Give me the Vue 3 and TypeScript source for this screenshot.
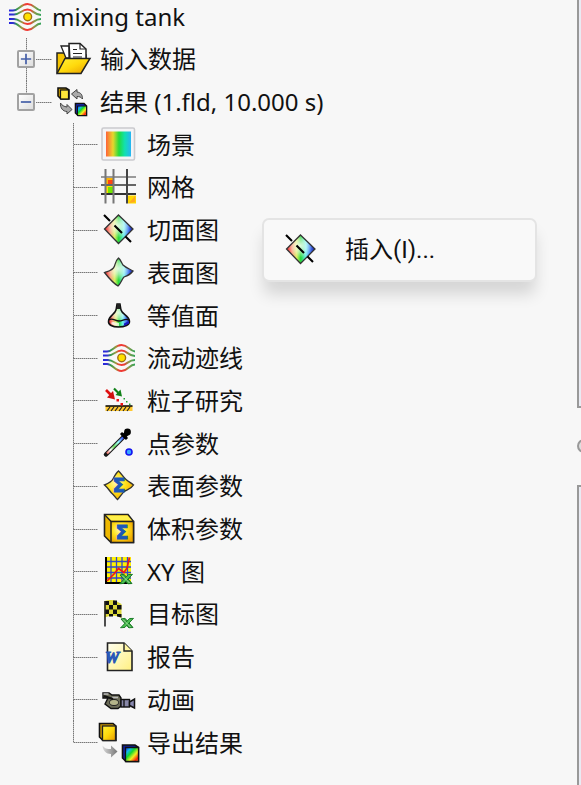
<script setup lang="ts">
import { computed, ref } from 'vue'

interface Glyph {
  text: string
  kind: 'sigma' | 'word'
  x: number
  y: number
}

interface TreeNode {
  icon: string
  label: string
  glyph?: Glyph
}

const resultsOpen = ref(true)
const inputsOpen = ref(false)

const results: TreeNode[] = [
  { icon: 'scene', label: '场景' },
  { icon: 'mesh', label: '网格' },
  { icon: 'cut', label: '切面图' },
  { icon: 'surface', label: '表面图' },
  { icon: 'iso', label: '等值面' },
  { icon: 'flow', label: '流动迹线' },
  { icon: 'particle', label: '粒子研究' },
  { icon: 'point', label: '点参数' },
  { icon: 'surface-param', label: '表面参数', glyph: { text: 'Σ', kind: 'sigma', x: 19, y: 24 } },
  { icon: 'volume-param', label: '体积参数', glyph: { text: 'Σ', kind: 'sigma', x: 22, y: 28 } },
  { icon: 'xy', label: 'XY 图' },
  { icon: 'goal', label: '目标图' },
  { icon: 'report', label: '报告', glyph: { text: 'W', kind: 'word', x: 12, y: 24 } },
  { icon: 'animation', label: '动画' },
  { icon: 'export', label: '导出结果' },
]

const visibleResults = computed(() => (resultsOpen.value ? results : []))
</script>

<template>
  <div class="page">
    <svg class="sprite" aria-hidden="true">
      <defs>
        <linearGradient id="g-flow" gradientUnits="userSpaceOnUse" x1="3" y1="0" x2="35" y2="0">
          <stop offset="0" stop-color="#2222e0" />
          <stop offset=".14" stop-color="#3333cc" />
          <stop offset=".24" stop-color="#2f9a50" />
          <stop offset=".4" stop-color="#9a9a40" />
          <stop offset=".5" stop-color="#f03a34" />
          <stop offset=".66" stop-color="#f03a34" />
          <stop offset=".8" stop-color="#8a9a48" />
          <stop offset="1" stop-color="#2fa45a" />
        </linearGradient>
        <linearGradient id="g-scene">
          <stop offset="0" stop-color="#ff6238" />
          <stop offset=".28" stop-color="#e8d62c" />
          <stop offset=".52" stop-color="#22dc3c" />
          <stop offset=".75" stop-color="#12e0b0" />
          <stop offset="1" stop-color="#28b4f4" />
        </linearGradient>
        <linearGradient id="g-rain">
          <stop offset="0" stop-color="#f02030" />
          <stop offset=".2" stop-color="#f8a080" />
          <stop offset=".36" stop-color="#d8f060" />
          <stop offset=".5" stop-color="#20d838" />
          <stop offset=".68" stop-color="#70f0f0" />
          <stop offset=".84" stop-color="#4878f0" />
          <stop offset="1" stop-color="#1010a0" />
        </linearGradient>
        <radialGradient id="g-white" cx=".48" cy=".38" r=".42">
          <stop offset="0" stop-color="#fff" stop-opacity=".85" />
          <stop offset=".5" stop-color="#fff" stop-opacity=".5" />
          <stop offset="1" stop-color="#fff" stop-opacity="0" />
        </radialGradient>
        <linearGradient id="g-gold" x1="0" y1="0" x2="1" y2="1">
          <stop offset="0" stop-color="#fff23a" />
          <stop offset=".5" stop-color="#ffd90c" />
          <stop offset="1" stop-color="#e89a00" />
        </linearGradient>
        <radialGradient id="g-gold-r" cx=".4" cy=".4" r=".65">
          <stop offset="0" stop-color="#fffbb0" />
          <stop offset=".5" stop-color="#ffe21c" />
          <stop offset="1" stop-color="#f0a800" />
        </radialGradient>
        <linearGradient id="g-cube" x1="0" y1="0" x2="1" y2="1">
          <stop offset="0" stop-color="#1020e0" />
          <stop offset=".22" stop-color="#10b8f0" />
          <stop offset=".4" stop-color="#10d830" />
          <stop offset=".62" stop-color="#f0f020" />
          <stop offset=".85" stop-color="#ff2010" />
          <stop offset="1" stop-color="#f8a020" />
        </linearGradient>
        <linearGradient id="g-page" x1="0" y1="0" x2="1" y2="1">
          <stop offset="0" stop-color="#fffff0" />
          <stop offset="1" stop-color="#fff080" />
        </linearGradient>
        <linearGradient id="g-arrow">
          <stop offset="0" stop-color="#d8d8d8" />
          <stop offset="1" stop-color="#777" />
        </linearGradient>
        <linearGradient id="g-drop" gradientUnits="userSpaceOnUse" x1="6" y1="28" x2="26" y2="9">
          <stop offset="0" stop-color="#f05040" />
          <stop offset=".22" stop-color="#fff" />
          <stop offset=".4" stop-color="#70e060" />
          <stop offset=".62" stop-color="#a0ffff" />
          <stop offset=".82" stop-color="#4060ff" />
          <stop offset="1" stop-color="#102080" />
        </linearGradient>
      </defs>

      <symbol id="excel" viewBox="0 0 14 11">
        <path d="M1 1.500 5 .800 13 10 9 10.500Z" fill="#38a53c" stroke="#187a26" stroke-width="1" />
        <path d="M9.500 1 13.500 .800 5 9.800 .500 10.500Z" fill="#4cc050" stroke="#187a26" stroke-width="1" />
        <path d="m3 2 7.500 7.500" stroke="#c8efc4" stroke-width=".8" />
      </symbol>

      <symbol id="flow" viewBox="0 0 36 36">
        <g fill="none" stroke="url(#g-flow)" stroke-width="2">
          <path d="M3 11.500H7C13 11.500 14.500 5 21.500 5S29 11 35 11.500" />
          <path d="M3 15.500H8C14 15.500 15.500 10.500 21.500 10.500S28 16 35 16" />
          <path d="M3 20H8C14 20 15.500 25 21.500 25S28 20 35 20" />
          <path d="M3 24H7C13 24 14.500 31 21.500 31S29 24.500 35 24.500" />
        </g>
        <circle cx="21.700" cy="17.800" r="3.900" fill="#ffe000" stroke="#a07010" stroke-width="1.400" />
      </symbol>

      <symbol id="folder" viewBox="0 0 36 36">
        <path d="M1 32V12H10L12 14H30V20" fill="#f6c400" stroke="#222" stroke-width="1.500" />
        <path d="M5 5H13V17H10Z" fill="#fff" stroke="#222" stroke-width="1.300" />
        <path d="M13 2.500H24L30 8V20H14Z" fill="#fff" stroke="#222" stroke-width="1.500" />
        <path d="M24 2.500V8H30M17 8.500H21M17 12.500H26M17 16H26" fill="none" stroke="#222" stroke-width="1.200" />
        <path d="M1 32.500 9 17.500H34L25 32.500Z" fill="url(#g-gold)" stroke="#222" stroke-width="1.500" />
      </symbol>

      <symbol id="results" viewBox="0 0 36 36">
        <path d="M2 4H10L13 6V15H5L2 12Z" fill="#c79a00" stroke="#111" stroke-width="1.600" />
        <rect x="4.500" y="6" width="8" height="9" fill="#ffe73a" stroke="#111" stroke-width="1.200" />
        <path d="M15.500 10 21 5.500V8C25 8.500 26.500 11 26.500 15 25 13 23.500 12.500 21 12.500V15Z" fill="#aaa" stroke="#444" stroke-width="1" />
        <path d="M16 25.500 11 20.500V23C8 22.500 6 21.500 4.500 19 4 24 7 27.500 11 27.500V30Z" fill="#aaa" stroke="#444" stroke-width="1" />
        <path d="M19.500 19.500H28L30.500 22V31.500H22L19.500 29Z" fill="#1428c8" stroke="#111" stroke-width="1.600" />
        <rect x="21.500" y="22" width="9" height="9.500" fill="url(#g-cube)" stroke="#111" />
      </symbol>

      <symbol id="scene" viewBox="0 0 36 36">
        <rect x="2" y="1" width="32.500" height="32" rx="1.500" fill="#f4f4f6" stroke="#cacace" stroke-width="1.600" />
        <rect x="6" y="4.500" width="25" height="25" fill="url(#g-scene)" />
      </symbol>

      <symbol id="mesh" viewBox="0 0 36 36">
        <rect x="6" y="8" width="8" height="8" fill="#ffb400" />
        <path d="M8 11h6v5H8Z" fill="#ff4410" />
        <rect x="6" y="16" width="8" height="9" fill="#ffe000" />
        <path d="M8 18h6v6H8Z" fill="#70e800" />
        <rect x="28" y="26.500" width="8" height="8" fill="#ffd800" />
        <path d="m29 34 6-7v6Z" fill="#ffa820" />
        <g fill="none" stroke-width="2">
          <path d="M1 8H36" stroke="#9a9a9a" />
          <path d="M1 16H36" stroke="#666" />
          <path d="M1 25H36" stroke="#333" />
          <path d="M5.500 0V34.500M13.500 0V34.500" stroke="#777" />
          <path d="M27 0V34.500" stroke="#444" />
        </g>
      </symbol>

      <symbol id="cut" viewBox="0 0 36 36">
        <path d="M18.500 3 33 17 18.500 31.500 4.500 17Z" fill="url(#g-rain)" />
        <path d="M18.500 3 33 17 18.500 31.500 4.500 17Z" fill="url(#g-white)" stroke="#333" stroke-width="1.300" />
        <path d="m4 3 6 6M14.500 13.500l7.500 7.500M25.500 24.500l5.500 5.500" stroke="#000" stroke-width="2.100" />
      </symbol>

      <symbol id="surface" viewBox="0 0 36 36">
        <path d="M18.500 3C21 5 21.500 8 23 10 26 13 30 14 33 16 30 20 27 21 24 22 22 24 20.500 29 18 31 13 28 8 22 4.500 17.500 9 16 13 15.500 14.500 11 15.500 8 16 5 18.500 3Z" fill="url(#g-rain)" />
        <path d="M18.500 3C21 5 21.500 8 23 10 26 13 30 14 33 16 30 20 27 21 24 22 22 24 20.500 29 18 31 13 28 8 22 4.500 17.500 9 16 13 15.500 14.500 11 15.500 8 16 5 18.500 3Z" fill="url(#g-white)" stroke="#333" stroke-width="1.300" />
      </symbol>

      <symbol id="iso" viewBox="0 0 36 36">
        <path d="M17 6h3l1 6c1 4 8 6 8.500 11 .500 4-5 6-11 6S8 27 8.500 23C9 18 15 16 16 12Z" fill="url(#g-rain)" />
        <path d="M17 6h3l1 6c1 4 8 6 8.500 11 .500 4-5 6-11 6S8 27 8.500 23C9 18 15 16 16 12Z" fill="url(#g-white)" stroke="#111" stroke-width="1.500" />
        <path d="M9 22c3-3 6 1 10 1s6-3 10-1" fill="none" stroke="#111" stroke-width="1.300" />
        <path d="M11 25c2-2 5 0 8 0v3c-4 0-7-1-8-3Z" fill="#fff" opacity=".75" />
        <path d="M17 6h3v5h-3Z" fill="#222" />
        <path d="M24 25.500 29 23v2.500L24 28Z" fill="#1818c0" />
      </symbol>

      <symbol id="particle" viewBox="0 0 36 36">
        <rect x="5.500" y="23" width="27" height="5" fill="#ffc830" />
        <path d="M5.500 23H32.500" stroke="#000" stroke-width="1.500" />
        <path d="m7 28 3-4m1 4 3-4m1 4 3-4m1 4 3-4m1 4 3-4m1 4 3-4" stroke="#222" stroke-width="1.200" />
        <path d="m6 7 6 6" stroke="#e01010" stroke-width="2.600" />
        <path d="M15 16.500 7 14.500 13 8Z" fill="#d01010" />
        <path d="m14 5.500 5 5" stroke="#108018" stroke-width="2.200" />
        <path d="M22 13.500 15.500 12 20.500 6.500Z" fill="#108018" />
        <path d="M16.500 16h2.500v2.500h-2.500ZM20.500 20h2.500v2.500h-2.500Z" fill="#f01010" />
        <path d="M23.500 15h1.500v1.500h-1.500ZM26 18h1.500v1.500H26ZM29 20.500h1.500V22H29Z" fill="#20a030" />
      </symbol>

      <symbol id="point" viewBox="0 0 36 36">
        <path d="m6 28.500 18-18" stroke="#181818" stroke-width="4.500" stroke-linecap="round" />
        <path d="M7 27.500 23.500 11" stroke="url(#g-drop)" stroke-width="2.300" />
        <path d="m21 7 6 6" stroke="#000" stroke-width="3" />
        <path d="m23 11 4-4" stroke="#000" stroke-width="5" />
        <circle cx="27.500" cy="6" r="3.400" fill="#000" />
        <circle cx="29" cy="26" r="3" fill="#38a8ff" stroke="#1414f0" stroke-width="1.600" />
      </symbol>

      <symbol id="surface-param" viewBox="0 0 36 36">
        <path d="M18.500 3C21 5 23 9 26 11.500 29 14 31 15 33.500 17 31 21 28 21.500 25 23 22 25 20 29 17.500 31.500 15 29 14 27 11.500 25 9 22 7 19 4.500 17 8 15.500 11.500 14 13 11 14.500 8 16 5 18.500 3Z" fill="url(#g-gold-r)" stroke="#333" stroke-width="1.400" />
      </symbol>

      <symbol id="volume-param" viewBox="0 0 36 36">
        <path d="M4.500 3.500H28L33.500 10.500V31.500H11L4.500 25Z" fill="#eeb800" stroke="#222" stroke-width="1.600" />
        <path d="M5.500 4.500H27.500L32 9.500H11Z" fill="#fff04a" />
        <rect x="11" y="10.500" width="22.500" height="21" fill="url(#g-gold-r)" stroke="#222" stroke-width="1.500" />
        <path d="m4.500 3.500 6.500 7" stroke="#222" stroke-width="1.300" />
      </symbol>

      <symbol id="xy" viewBox="0 0 36 36">
        <rect x="6" y="3" width="25" height="26" fill="#fff200" />
        <path d="M11 3V29M16.500 3V29M22 3V29M27.500 3V29M6 7.500H31M6 13H31M6 18.500H31M6 24H31" stroke="#3448c8" stroke-width="1.300" />
        <path d="M6 3V29H31" fill="none" stroke="#000" stroke-width="2" />
        <path d="m7 27 7-7 4.500-5.500 5.500 4L27 14l2.500-10.500" fill="none" stroke="#f01818" stroke-width="1.700" />
        <use href="#excel" x="19" y="19.500" width="14" height="11" />
      </symbol>

      <symbol id="goal" viewBox="0 0 36 36">
        <path d="M4.500 5Q12 3 17 5.500L21.500 8V22Q14 18 4.500 21.500Z" fill="#dcd838" />
        <path d="M5 5h4v4H5ZM13 4.500h4V9h-4ZM9 9h4v4.500H9ZM17 9h4.500v4.500H17ZM5 13.500h4V18H5ZM13 13.500h4V18h-4ZM9 18h4v2.500H9ZM17 18h4.500v3.500L17 20.500Z" fill="#111" />
        <path d="M5 5V30.500" stroke="#222" stroke-width="1.600" />
        <use href="#excel" x="20" y="21.500" width="14" height="11" />
      </symbol>

      <symbol id="report" viewBox="0 0 36 36">
        <path d="M7.500 4H24L32 12V31.500H7.500Z" fill="url(#g-page)" stroke="#222" stroke-width="1.600" />
        <path d="M24 4V12H32" fill="#fff6a0" stroke="#222" stroke-width="1.400" />
      </symbol>

      <symbol id="animation" viewBox="0 0 36 36">
        <path d="M3 11H9L12 13H19L21 16V24L18 26.500H11L5 22 8 16H3Z" fill="#6c6c58" stroke="#111" stroke-width="1.400" />
        <path d="M3.500 12h5M12 15.500h6" stroke="#bbb" stroke-width="1.500" />
        <ellipse cx="14" cy="20.500" rx="4.500" ry="3" fill="#b4b48a" stroke="#222" />
        <path d="m4 14 9 3" stroke="#111" stroke-width="2" />
        <rect x="21" y="17.500" width="8.500" height="7.500" fill="#8888a8" stroke="#111" stroke-width="1.400" />
        <path d="M24 18v7" stroke="#111" stroke-width="1.300" />
        <path d="m29.500 20 5-3V26l-5-2.500Z" fill="#8888b0" stroke="#111" stroke-width="1.500" />
      </symbol>

      <symbol id="export" viewBox="0 0 36 36" overflow="visible">
        <path d="M-.500-1.500H13L16 1V15.500H3L-.500 12Z" fill="#c89400" stroke="#111" stroke-width="1.600" />
        <rect x="2.500" y="1" width="13" height="14.500" fill="url(#g-gold)" stroke="#222" stroke-width="1.300" />
        <path d="M2.500 20.500C4.500 23.500 7 24 11 24V20.500L17.500 26.500 11 32.500V29C6 29 3 26 2.500 20.500Z" fill="url(#g-arrow)" />
        <path d="M22.500 20H35L38.500 22.500V36.500H26L22.500 33Z" fill="#1020a0" stroke="#111" stroke-width="1.600" />
        <path d="M25.500 22.500H38.500V36.500H25.500Z" fill="url(#g-cube)" stroke="#111" stroke-width="1.300" />
      </symbol>
    </svg>

    <main class="workspace">
      <div class="tree" role="tree" aria-label="mixing tank">
        <div class="root" role="treeitem" aria-level="1" aria-expanded="true">
          <svg class="icon" aria-hidden="true"><use href="#flow" /></svg>
          <span class="label">mixing tank</span>
        </div>

        <div class="row branch" role="treeitem" aria-level="2" :aria-expanded="inputsOpen">
          <span class="rail">
            <span class="dots-v"></span>
            <button class="expander" type="button" aria-label="输入数据" @click="inputsOpen = !inputsOpen">
              <svg viewBox="0 0 14 14" aria-hidden="true"><path :d="inputsOpen ? 'M1 7H13' : 'M1 7H13M7 1V13'" /></svg>
            </button>
            <span class="dots-v"></span>
          </span>
          <span class="dots-h"></span>
          <svg class="icon" aria-hidden="true"><use href="#folder" /></svg>
          <span class="label">输入数据</span>
        </div>

        <div class="row branch" role="treeitem" aria-level="2" :aria-expanded="resultsOpen">
          <span class="rail">
            <span class="dots-v"></span>
            <button class="expander" type="button" aria-label="结果" @click="resultsOpen = !resultsOpen">
              <svg viewBox="0 0 14 14" aria-hidden="true"><path :d="resultsOpen ? 'M1 7H13' : 'M1 7H13M7 1V13'" /></svg>
            </button>
            <span class="rail-end"></span>
          </span>
          <span class="dots-h"></span>
          <svg class="icon" aria-hidden="true"><use href="#results" /></svg>
          <span class="label">结果 (1.fld, 10.000 s)</span>
        </div>

        <div v-for="node in visibleResults" :key="node.icon" class="row leaf" role="treeitem" aria-level="3">
          <span class="elbow"><span class="dots-v"></span><span class="dots-v lower"></span></span>
          <span class="dots-h"></span>
          <svg class="icon" aria-hidden="true">
            <use :href="'#' + node.icon" />
            <text v-if="node.glyph" :x="node.glyph.x" :y="node.glyph.y" :class="node.glyph.kind">{{ node.glyph.text }}</text>
          </svg>
          <span class="label">{{ node.label }}</span>
        </div>
      </div>

      <div class="menu" role="menu">
        <button class="menu-item" type="button" role="menuitem">
          <svg class="icon" aria-hidden="true"><use href="#cut" /></svg>
          <span>插入(I)...</span>
        </button>
      </div>
    </main>

    <aside class="edge">
      <div class="pane upper"></div>
      <div class="splitter"><span class="grip"></span></div>
      <div class="pane bottom"></div>
    </aside>
  </div>
</template>

<style>
body {
  background: #f7f7f7;
}
</style>

<style scoped>
.page {
  display: flex;
  height: 100vh;
  background: #f7f7f7;
  color: #111;
  font: 24px/32px "Noto Sans", "Noto Sans CJK SC", sans-serif;
  overflow: hidden;
}

.sprite {
  position: absolute;
  width: 0;
  height: 0;
}

.sigma {
  font: bold 19px "DejaVu Sans", sans-serif;
  fill: #1c58b8;
  stroke: #1c58b8;
  stroke-width: 1px;
  text-anchor: middle;
}

.word {
  font: italic bold 16px "Liberation Serif", serif;
  fill: #2858b8;
  stroke: #2858b8;
  stroke-width: 1px;
  text-anchor: middle;
}

.workspace {
  position: relative;
  flex: 1;
  min-width: 0;
}

.tree {
  display: flex;
  flex-direction: column;
  box-sizing: border-box;
  height: 100%;
  padding-bottom: 21px;
}

.root {
  display: flex;
  flex: none;
  align-items: center;
  box-sizing: border-box;
  height: 38px;
  padding: 0 0 4px 6px;
  gap: 10px;
}

.row {
  display: flex;
  flex: 0 1 43px;
  align-items: center;
  min-height: 36px;
}

.branch {
  padding-left: 17px;
}

.leaf {
  padding-left: 72px;
}

.icon {
  flex: none;
  width: 36px;
  height: 36px;
  overflow: visible;
}

.label {
  white-space: nowrap;
}

.row .label {
  margin-left: 8px;
}

.leaf .label {
  margin-left: 11px;
}

.rail,
.elbow {
  display: flex;
  flex-direction: column;
  align-items: center;
  align-self: stretch;
}

.rail {
  width: 18px;
}

.rail-end {
  flex: 1;
}

.elbow {
  width: 2px;
}

.dots-v {
  flex: 1;
  width: 1px;
  background: repeating-linear-gradient(#777 0 1px, #bbb 1px 2px);
}

.dots-h {
  flex: none;
  height: 1px;
  background: repeating-linear-gradient(90deg, #777 0 1px, #bbb 1px 2px);
}

.branch .dots-h {
  width: 16px;
  margin: 0 4px 0 1px;
}

.leaf .dots-h {
  width: 24px;
  margin-right: 2px;
}

.leaf:last-child .lower {
  visibility: hidden;
}

.expander {
  flex: none;
  width: 18px;
  height: 18px;
  padding: 1px;
  border: 2px solid #a2a2a2;
  border-radius: 2px;
  background: linear-gradient(135deg, #fff, #dedede);
}

.expander svg {
  display: block;
  width: 12px;
  height: 12px;
}

.expander path {
  fill: none;
  stroke: #4660a8;
  stroke-width: 2;
}

.menu {
  position: absolute;
  top: 218px;
  left: 262px;
  box-sizing: border-box;
  width: 275px;
  border: 2px solid #e4e4e4;
  border-radius: 7px;
  background: #f9f9f9;
  box-shadow: 0 14px 16px -2px rgb(0 0 0 / 14%);
}

.menu-item {
  display: flex;
  align-items: center;
  width: 100%;
  height: 60px;
  padding: 0 18px;
  gap: 27px;
  border: 0;
  background: none;
  color: inherit;
  font-family: Roboto, "Noto Sans CJK SC", sans-serif;
  font-size: 24px;
  line-height: 32px;
}

.edge {
  display: flex;
  flex: none;
  flex-direction: column;
  width: 4px;
}

.pane {
  box-sizing: border-box;
  border-left: 2px solid #999;
  background: #e9ebf3;
}

.upper {
  flex: 408;
  border-bottom: 2px solid #999;
}

.bottom {
  flex: 300;
  border-top: 2px solid #999;
}

.splitter {
  display: flex;
  flex: 0 0 77px;
  align-items: center;
}

.grip {
  flex: none;
  width: 10px;
  height: 10px;
  border: 2px solid #999;
  border-radius: 50%;
  background: #ddd;
}
</style>
